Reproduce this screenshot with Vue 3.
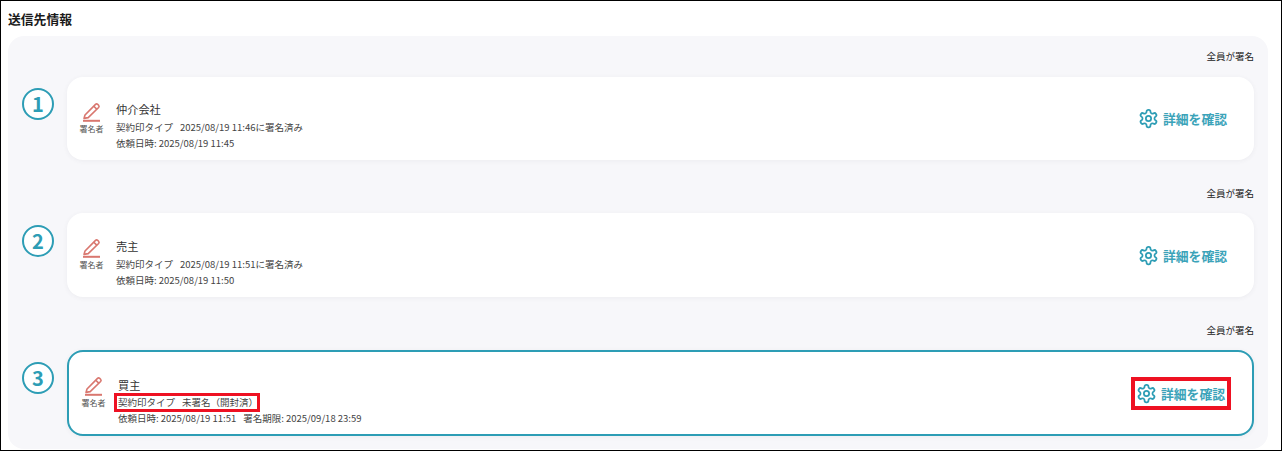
<script setup>
const rows = [
  { n: 1, name: '仲介会社', status: '2025/08/19 11:46に署名済み', meta: ['依頼日時: 2025/08/19 11:45'] },
  { n: 2, name: '売主', status: '2025/08/19 11:51に署名済み', meta: ['依頼日時: 2025/08/19 11:50'] },
  { n: 3, name: '買主', status: '未署名（開封済）', meta: ['依頼日時: 2025/08/19 11:51', '署名期限: 2025/09/18 23:59'], active: true },
]
</script>

<template>
  <div class="frame">
    <h2 class="title">送信先情報</h2>
    <section class="panel">
      <div v-for="r in rows" :key="r.n" class="group" :class="{ current: r.active }">
        <div class="caption">全員が署名</div>
        <div class="row">
          <div class="num">{{ r.n }}</div>
          <div class="card" :class="{ active: r.active }">
            <div class="role">
              <svg width="22" height="20" viewBox="0 0 22 20" fill="none" stroke="#d9776f" stroke-width="1.6" stroke-linejoin="round">
                <path d="M4 13 L14.5 2.4 Q15.6 1.4 16.7 2.4 L17.6 3.3 Q18.6 4.4 17.6 5.5 L7.2 15.6 L3 16.4 Z" />
                <path d="M12.8 4.2 L16 7.4" />
                <path d="M2 18.8 H19" stroke-width="2" />
              </svg>
              <span class="role-label">署名者</span>
            </div>
            <div class="info">
              <div class="name">{{ r.name }}</div>
              <div class="line"><span class="status" :class="{ marked: r.active }"><span>契約印タイプ</span><span>{{ r.status }}</span></span></div>
              <div class="line meta"><span v-for="m in r.meta" :key="m">{{ m }}</span></div>
            </div>
            <div class="detail" :class="{ marked: r.active }">
              <svg width="21" height="21" viewBox="0 0 24 24" fill="none" stroke="#2d9db5" stroke-width="2" stroke-linecap="round" stroke-linejoin="round">
                <path d="M12.22 2h-.44a2 2 0 0 0-2 2v.18a2 2 0 0 1-1 1.73l-.43.25a2 2 0 0 1-2 0l-.15-.08a2 2 0 0 0-2.73.73l-.22.38a2 2 0 0 0 .73 2.73l.15.1a2 2 0 0 1 1 1.72v.51a2 2 0 0 1-1 1.74l-.15.09a2 2 0 0 0-.73 2.73l.22.38a2 2 0 0 0 2.73.73l.15-.08a2 2 0 0 1 2 0l.43.25a2 2 0 0 1 1 1.73V20a2 2 0 0 0 2 2h.44a2 2 0 0 0 2-2v-.18a2 2 0 0 1 1-1.73l.43-.25a2 2 0 0 1 2 0l.15.08a2 2 0 0 0 2.73-.73l.22-.39a2 2 0 0 0-.73-2.73l-.15-.08a2 2 0 0 1-1-1.74v-.5a2 2 0 0 1 1-1.74l.15-.09a2 2 0 0 0 .73-2.73l-.22-.38a2 2 0 0 0-2.73-.73l-.15.08a2 2 0 0 1-2 0l-.43-.25a2 2 0 0 1-1-1.73V4a2 2 0 0 0-2-2z" />
                <circle cx="12" cy="12" r="3" />
              </svg>
              <span>詳細を確認</span>
            </div>
          </div>
        </div>
      </div>
    </section>
  </div>
</template>

<style>
html, body { margin: 0; background: #fff; }
</style>

<style scoped>
.frame {
  box-sizing: border-box;
  width: 1282px;
  height: 451px;
  overflow: hidden;
  border: 1px solid #000;
  padding: 0 13px 0 7px;
  background: #fff;
  font-family: "Noto Sans CJK JP", "Noto Sans", sans-serif;
  color: #333;
}
.title {
  margin: 0;
  height: 35px;
  padding-top: 9px;
  box-sizing: border-box;
  font-size: 12.8px;
  line-height: 17px;
  font-weight: 700;
  color: #1a1a1a;
}
.panel {
  box-sizing: border-box;
  height: 413px;
  padding: 12px 14px 0 14px;
  background: #f7f7fa;
  border-radius: 16px;
}
.group { height: 137px; }
.group.current { height: 140px; }
.caption {
  text-align: right;
  font-size: 9.5px;
  line-height: 16px;
  height: 28px;
  color: #222;
}
.group:first-child .caption { height: 29px; }
.row {
  display: flex;
  align-items: flex-start;
  gap: 13px;
}
.group:first-child .num { margin-top: 11px; }
.group:first-child .card { height: 83px; }
.num {
  box-sizing: border-box;
  width: 32px;
  height: 32px;
  margin-top: 12px;
  flex: none;
  display: flex;
  align-items: center;
  justify-content: center;
  border: 2px solid #2d9db5;
  border-radius: 50%;
  color: #2d9db5;
  font-size: 20px;
  font-weight: 700;
  line-height: 1;
  background: #fff;
}
.card {
  box-sizing: border-box;
  flex: 1;
  height: 84px;
  display: flex;
  align-items: center;
  padding: 0 27px 0 12px;
  background: #fff;
  border-radius: 16px;
  box-shadow: 0 1px 5px rgba(60, 60, 90, 0.06);
}
.card.active {
  height: 86px;
  border: 2px solid #2d9db5;
  padding: 0 25px 0 12px;
}
.role {
  width: 25px;
  margin-right: 12px;
  margin-bottom: 2px;
  flex: none;
  display: flex;
  flex-direction: column;
  align-items: center;
}
.role svg { margin-bottom: 1px; }
.role-label {
  font-size: 8px;
  line-height: 11px;
  white-space: nowrap;
  color: #555;
}
.info { flex: 1; padding-top: 14px; }
.group:nth-child(2) .info { padding-top: 15px; }
.active .info { padding-top: 17px; }
.name {
  font-size: 11.2px;
  line-height: 16px;
  margin-bottom: 2px;
  color: #333;
}
.line {
  font-size: 9.5px;
  line-height: 16px;
  color: #444;
}
.status span + span { margin-left: 7px; }
.meta span + span { margin-left: 7px; }
.status { display: inline-block; white-space: nowrap; }
.status.marked {
  outline: 3px solid #ee1122;
  line-height: 13px;
  padding-left: 1px;
  margin-left: -1px;
  margin-bottom: 3px;
  vertical-align: top;
  margin-top: 1px;
}
.status.marked span + span { margin-right: -1px; }
.active .info .meta { margin-top: -2px; }
.detail {
  display: flex;
  align-items: center;
  gap: 4px;
  font-size: 12.8px;
  font-weight: 700;
  color: #3ba3b9;
}
.detail.marked {
  outline: 4px solid #ee1122;
  height: 25px;
  padding: 0 2px 0 1px;
}
</style>
